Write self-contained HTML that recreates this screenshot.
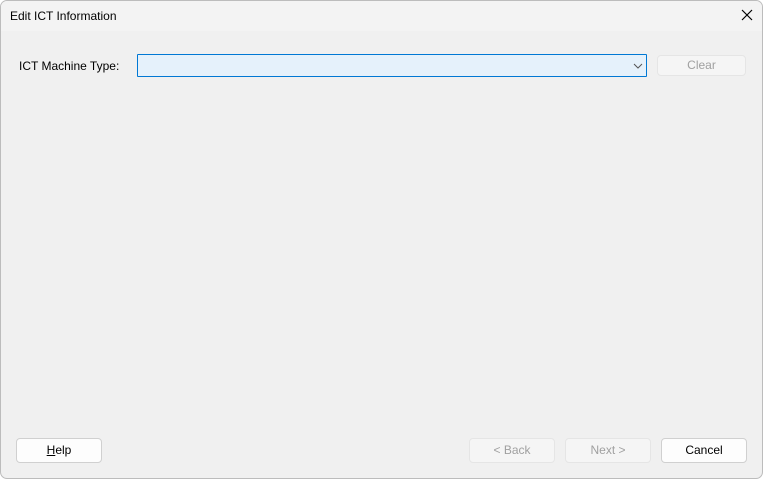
<!DOCTYPE html>
<html><head><style>
*{box-sizing:border-box;margin:0;padding:0}
body{width:763px;height:479px;background:#fff;font-family:"Segoe UI","Liberation Sans",sans-serif;font-size:12px;color:#000;overflow:hidden}
.win{position:absolute;left:0;top:0;width:763px;height:479px;border:1px solid #bcbcbc;border-radius:7px;background:#f0f0f0;overflow:hidden}
.tb{position:absolute;left:0;top:0;width:100%;height:30px;background:#f3f3f3}
.t{position:absolute;left:9px;top:8px;font-size:12px}
.x{position:absolute;left:739px;top:7px}
.lbl{position:absolute;left:18px;top:58px}
.combo{position:absolute;left:136px;top:53px;width:510px;height:23px;border:1px solid #0078d4;background:#e5f1fb;border-radius:1px}
.btn{position:absolute;height:25px;border:1px solid #d0d0d0;border-radius:4px;background:#fdfdfd;text-align:center;line-height:23px}
.dis{background:#f5f5f5;border-color:#e5e5e5;color:#a0a0a0}
</style></head><body>
<div class="win">
<div class="tb"><div class="t">Edit ICT Information</div>
<svg class="x" width="14" height="14" viewBox="0 0 14 14"><path d="M2 2L12 12M12 2L2 12" stroke="#000" stroke-width="1.2"/></svg></div>
<div class="lbl">ICT Machine Type:</div>
<div class="combo"><svg style="position:absolute;left:495px;top:8px" width="10" height="6" viewBox="0 0 10 6"><path d="M1 1L5 5L9 1" fill="none" stroke="#555" stroke-width="1"/></svg></div>
<div class="btn dis" style="left:656px;top:54px;width:89px;height:21px;line-height:19px">Clear</div>
<div class="btn" style="left:15px;top:437px;width:86px"><u>H</u>elp</div>
<div class="btn dis" style="left:468px;top:437px;width:86px">&lt; Back</div>
<div class="btn dis" style="left:564px;top:437px;width:86px">Next &gt;</div>
<div class="btn" style="left:660px;top:437px;width:86px">Cancel</div>
</div>
</body></html>
